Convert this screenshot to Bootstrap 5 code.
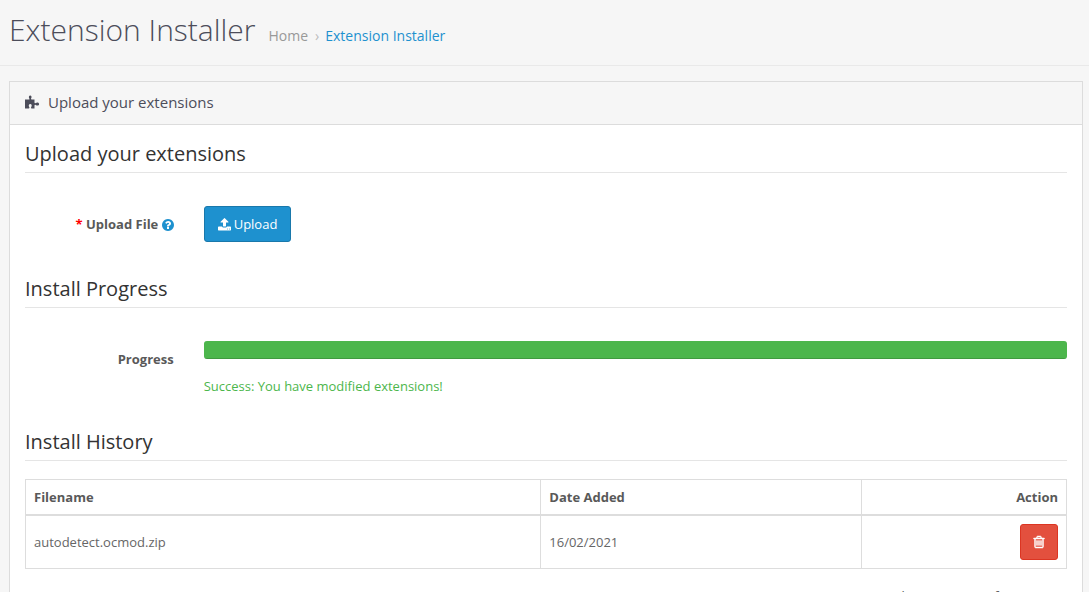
<!DOCTYPE html>
<html lang="en">
<head>
<meta charset="utf-8">
<meta name="viewport" content="width=device-width, initial-scale=1">
<title>Extension Installer</title>
<link href="https://cdn.jsdelivr.net/npm/bootstrap@5.3.0/dist/css/bootstrap.min.css" rel="stylesheet">
<style>
  body { font-family: "Open Sans", sans-serif; font-size: 13px; line-height: 18px; color: #666; background: #f6f6f6; }
  a { color: #1e91cf; text-decoration: none; }
  svg { fill: currentColor; }
  .page-top { padding: 13px 9px 19px; border-bottom: 1px solid #e9e9e9; gap: 13px; }
  .page-top h1 { font-size: 30px; line-height: 33px; font-weight: 300; color: #4c4d5a; }
  .page-top nav { padding-top: 13px; }
  .breadcrumb { --bs-breadcrumb-divider: "›"; --bs-breadcrumb-item-padding-x: 6px; --bs-breadcrumb-divider-color: #bbb; font-size: 14px; line-height: 20px; }
  .breadcrumb a { color: #999; }
  .breadcrumb .active { padding-left: 7px; }
  .breadcrumb .active a { color: #1e91cf; }
  .page-main { padding: 15px 6px 15px 9px; }
  .panel-box { border: 1px solid #dcdcdc; border-radius: 0; color: inherit; }
  .panel-head { background: #f6f6f6; border-bottom: 1px solid #dcdcdc; padding: 10px 15px 12px; font-size: 15px; line-height: 20px; color: #4c4d5a; gap: 8px; border-radius: 0 !important; }
  .panel-inner { padding: 15px; }
  legend { float: none; font-size: 20px; line-height: 28px; color: #333; padding-bottom: 4px; margin-bottom: 18px; border-bottom: 1px solid #e5e5e5; }
  .form-line { --bs-gutter-x: 30px; padding: 15px 0; margin-bottom: 18px; }
  .form-line label, .form-line .line-label { padding-top: 9px; font-weight: 700; color: #595959; text-align: right; }
  .required-mark { color: #f00; }
  .help { color: #1e91cf; vertical-align: -2px; }
  .btn { --bs-btn-font-size: 13px; --bs-btn-line-height: 18px; --bs-btn-padding-x: 12px; --bs-btn-padding-y: 8px; --bs-btn-border-radius: 3px; }
  .btn-primary { --bs-btn-padding-x: 13px; --bs-btn-bg: #1e91cf; --bs-btn-border-color: #1978ab; gap: 3px; }
  .btn-danger { --bs-btn-bg: #e3503e; --bs-btn-border-color: #dc3522; }
  .progress { --bs-progress-height: 18px; --bs-progress-bar-bg: #4cb64c; --bs-progress-border-radius: 3px; margin-bottom: 18px; }
  .progress-bar { box-shadow: inset 0 -1px 0 rgba(0, 0, 0, .15); }
  .success-text { color: #4cb64c; }
  .history { --bs-table-color: #666; border-color: #ddd; margin-bottom: 18px; border-collapse: collapse; }
  .history > :not(caption) > * > * { padding: 8px; border: 1px solid #ddd; vertical-align: middle; }
  .history > thead > tr > th { border-bottom-width: 2px; color: #595959; }
  .history .file-col { width: 49.5%; }
  .history .date-col { width: 30.8%; }
  .result-count { color: #555; }
</style>
</head>
<body>
<header class="page-top d-flex align-items-start">
  <h1 class="m-0">Extension Installer</h1>
  <nav aria-label="breadcrumb">
    <ol class="breadcrumb m-0">
      <li class="breadcrumb-item"><a href="#">Home</a></li>
      <li class="breadcrumb-item active"><a href="#">Extension Installer</a></li>
    </ol>
  </nav>
</header>
<main class="page-main">
  <div class="card panel-box">
    <div class="card-header panel-head d-flex align-items-center">
      <svg width="15" height="14" viewBox="0 0 15 14" aria-hidden="true"><path d="M0 4.500h3.700c.9 0 1-.6.6-1.100C3.400 2 4 .4 5.200.4s1.900 1.500 1 2.900c-.4.600-.3 1.200.5 1.200H9.500v3.100c0 .8.700.9 1.200.4 1.400-1.100 3.400-.6 3.400 1s-2 2-3.400.9c-.5-.5-1.200-.3-1.200.5V13.500H6.700c-.9 0-.9-.8-.4-1.500.9-1.600.2-2.900-1.100-2.900s-1.900 1.500-1 3c.5.700.2 1.400-.5 1.400H0z"/></svg>
      <span>Upload your extensions</span>
    </div>
    <div class="card-body panel-inner">
      <form>
        <fieldset>
          <legend>Upload your extensions</legend>
          <div class="row form-line">
            <label class="col-2" for="button-upload"><span class="required-mark">*</span> Upload File <svg class="help" width="12" height="12" viewBox="128 128 1536 1536" aria-hidden="true"><path d="M1024 1376v-192q0-14-9-23t-23-9h-192q-14 0-23 9t-9 23v192q0 14 9 23t23 9h192q14 0 23-9t9-23zm256-672q0-88-55.500-163t-138.500-116-170-41q-243 0-371 213-15 24 8 42l132 100q7 6 19 6 16 0 25-12 53-68 86-92 34-24 86-24 48 0 85.500 26t37.500 59q0 38-20 61t-68 45q-63 28-115.500 86.500t-52.500 125.500v36q0 14 9 23t23 9h192q14 0 23-9t9-23q0-19 21.500-49.500t54.500-49.500q32-18 49-28.500t46-35 44.500-48 28-60.500 12.500-81zm384 192q0 209-103 385.500t-279.500 279.500-385.500 103-385.500-103-279.500-279.500-103-385.500 103-385.500 279.500-279.500 385.500-103 385.500 103 279.500 279.500 103 385.500z"/></svg></label>
            <div class="col-10">
              <button type="button" id="button-upload" class="btn btn-primary d-flex align-items-center"><svg width="13" height="13" viewBox="64 64 1664 1664" aria-hidden="true"><path d="M1344 1472q0-26-19-45t-45-19-45 19-19 45 19 45 45 19 45-19 19-45zm256 0q0-26-19-45t-45-19-45 19-19 45 19 45 45 19 45-19 19-45zm128-224v320q0 40-28 68t-68 28h-1472q-40 0-68-28t-28-68v-320q0-40 28-68t68-28h427q21 56 70.500 92t110.500 36h256q61 0 110.500-36t70.500-92h427q40 0 68 28t28 68zm-325-648q-17 40-59 40h-256v448q0 26-19 45t-45 19h-256q-26 0-45-19t-19-45v-448h-256q-42 0-59-40-17-39 14-69l448-448q18-19 45-19t45 19l448 448q31 30 14 69z"/></svg>Upload</button>
            </div>
          </div>
        </fieldset>
        <fieldset>
          <legend>Install Progress</legend>
          <div class="row form-line">
            <div class="col-2 line-label" id="progress-label">Progress</div>
            <div class="col-10">
              <div class="progress" role="progressbar" aria-labelledby="progress-label" aria-valuenow="100" aria-valuemin="0" aria-valuemax="100">
                <div class="progress-bar" style="width: 100%"></div>
              </div>
              <div class="success-text">Success: You have modified extensions!</div>
            </div>
          </div>
        </fieldset>
        <fieldset>
          <legend>Install History</legend>
          <table class="table history">
            <thead>
              <tr><th class="file-col">Filename</th><th class="date-col">Date Added</th><th class="text-end">Action</th></tr>
            </thead>
            <tbody>
              <tr>
                <td>autodetect.ocmod.zip</td>
                <td>16/02/2021</td>
                <td><button type="button" class="btn btn-danger d-block ms-auto" aria-label="Delete"><svg class="d-block" width="12" height="18" viewBox="128 128 1536 1536" stroke="currentColor" stroke-width="60" aria-hidden="true"><path d="M704 736v576q0 14-9 23t-23 9h-64q-14 0-23-9t-9-23v-576q0-14 9-23t23-9h64q14 0 23 9t9 23zm256 0v576q0 14-9 23t-23 9h-64q-14 0-23-9t-9-23v-576q0-14 9-23t23-9h64q14 0 23 9t9 23zm256 0v576q0 14-9 23t-23 9h-64q-14 0-23-9t-9-23v-576q0-14 9-23t23-9h64q14 0 23 9t9 23zm128 724v-948h-896v948q0 22 7 40.500t14.500 27 10.500 8.500h832q3 0 10.500-8.500t14.500-27 7-40.500zm-672-1076h448l-48-117q-7-9-17-11h-317q-10 2-17 11zm928 32v64q0 14-9 23t-23 9h-96v948q0 83-47 143.500t-113 60.500h-832q-66 0-113-58.500t-47-141.500v-952h-96q-14 0-23-9t-9-23v-64q0-14 9-23t23-9h309l70-167q15-37 54-63t79-26h320q40 0 79 26t54 63l70 167h309q14 0 23 9t9 23z"/></svg></button></td>
              </tr>
            </tbody>
          </table>
          <div class="result-count text-end">Showing 1 to 1 of 1 (1 Pages)</div>
        </fieldset>
      </form>
    </div>
  </div>
</main>
<script src="https://cdn.jsdelivr.net/npm/bootstrap@5.3.0/dist/js/bootstrap.bundle.min.js"></script>
</body>
</html>
